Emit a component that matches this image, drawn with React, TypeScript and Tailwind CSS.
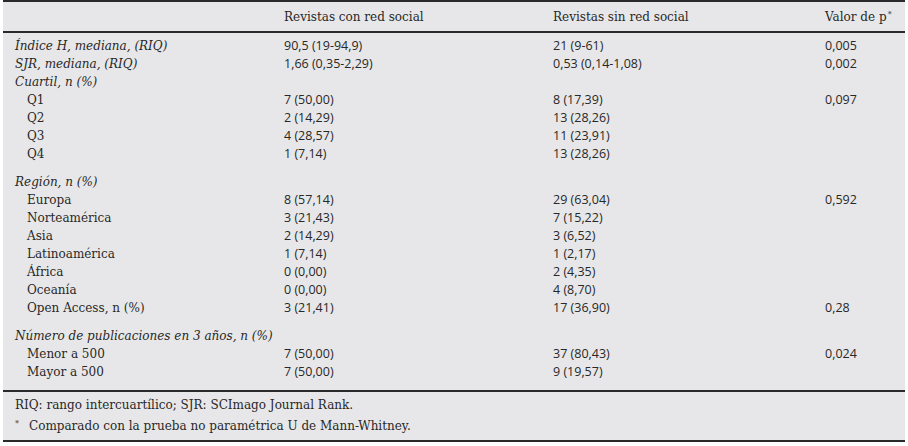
type Row = {
  label: string;
  italic?: boolean;
  indent?: boolean;
  a?: string;
  b?: string;
  p?: string;
};

const groups: Row[][] = [
  [
    { label: 'Índice H, mediana, (RIQ)', italic: true, a: '90,5 (19-94,9)', b: '21 (9-61)', p: '0,005' },
    { label: 'SJR, mediana, (RIQ)', italic: true, a: '1,66 (0,35-2,29)', b: '0,53 (0,14-1,08)', p: '0,002' },
    { label: 'Cuartil, n (%)', italic: true },
    { label: 'Q1', indent: true, a: '7 (50,00)', b: '8 (17,39)', p: '0,097' },
    { label: 'Q2', indent: true, a: '2 (14,29)', b: '13 (28,26)' },
    { label: 'Q3', indent: true, a: '4 (28,57)', b: '11 (23,91)' },
    { label: 'Q4', indent: true, a: '1 (7,14)', b: '13 (28,26)' },
  ],
  [
    { label: 'Región, n (%)', italic: true },
    { label: 'Europa', indent: true, a: '8 (57,14)', b: '29 (63,04)', p: '0,592' },
    { label: 'Norteamérica', indent: true, a: '3 (21,43)', b: '7 (15,22)' },
    { label: 'Asia', indent: true, a: '2 (14,29)', b: '3 (6,52)' },
    { label: 'Latinoamérica', indent: true, a: '1 (7,14)', b: '1 (2,17)' },
    { label: 'África', indent: true, a: '0 (0,00)', b: '2 (4,35)' },
    { label: 'Oceanía', indent: true, a: '0 (0,00)', b: '4 (8,70)' },
    { label: 'Open Access, n (%)', indent: true, a: '3 (21,41)', b: '17 (36,90)', p: '0,28' },
  ],
  [
    { label: 'Número de publicaciones en 3 años, n (%)', italic: true },
    { label: 'Menor a 500', indent: true, a: '7 (50,00)', b: '37 (80,43)', p: '0,024' },
    { label: 'Mayor a 500', indent: true, a: '7 (50,00)', b: '9 (19,57)' },
  ],
];

const serif = "font-['DejaVu_Serif',serif]";
const sans = "font-['Open_Sans',sans-serif] text-[12.5px]";
const cols = 'grid grid-cols-[281px_269px_272px_1fr]';

export default function App() {
  return (
    <div className="w-[908px] h-[446px] bg-white pl-[3px]">
      <div className="w-[902px] bg-[#e7e7e9] text-[#282828] border-t-2 border-b-2 border-[#2a2a2a]">
        <div className={`${cols} h-[31px] items-center border-b-2 border-[#2a2a2a] text-[12px] ${serif}`}>
          <div />
          <div>Revistas con red social</div>
          <div>Revistas sin red social</div>
          <div>
            Valor de p<span className="relative -top-[4px] ml-[1px] text-[8px]">*</span>
          </div>
        </div>

        <div className="pt-[4px] pb-[9px] flex flex-col gap-[10px] border-b-2 border-[#2a2a2a]">
          {groups.map((g, gi) => (
            <div key={gi} className="flex flex-col">
              {g.map((r) => (
                <div key={r.label} className={`${cols} h-[18px] items-center`}>
                  <div
                    className={`${serif} text-[12px] ${r.indent ? 'pl-[24px]' : 'pl-[12px]'} ${r.italic ? 'italic' : ''}`}
                  >
                    {r.label}
                  </div>
                  <div className={sans}>{r.a}</div>
                  <div className={sans}>{r.b}</div>
                  <div className={sans}>{r.p}</div>
                </div>
              ))}
            </div>
          ))}
        </div>

        <div className={`pt-[3px] pb-[3px] pl-[12px] text-[12px] leading-[21px] ${serif}`}>
          <div>RIQ: rango intercuartílico; SJR: SCImago Journal Rank.</div>
          <div className="flex">
            <span className="relative -top-[3px] w-[14px] text-[8px]">*</span>
            <span>Comparado con la prueba no paramétrica U de Mann-Whitney.</span>
          </div>
        </div>
      </div>
    </div>
  );
}
